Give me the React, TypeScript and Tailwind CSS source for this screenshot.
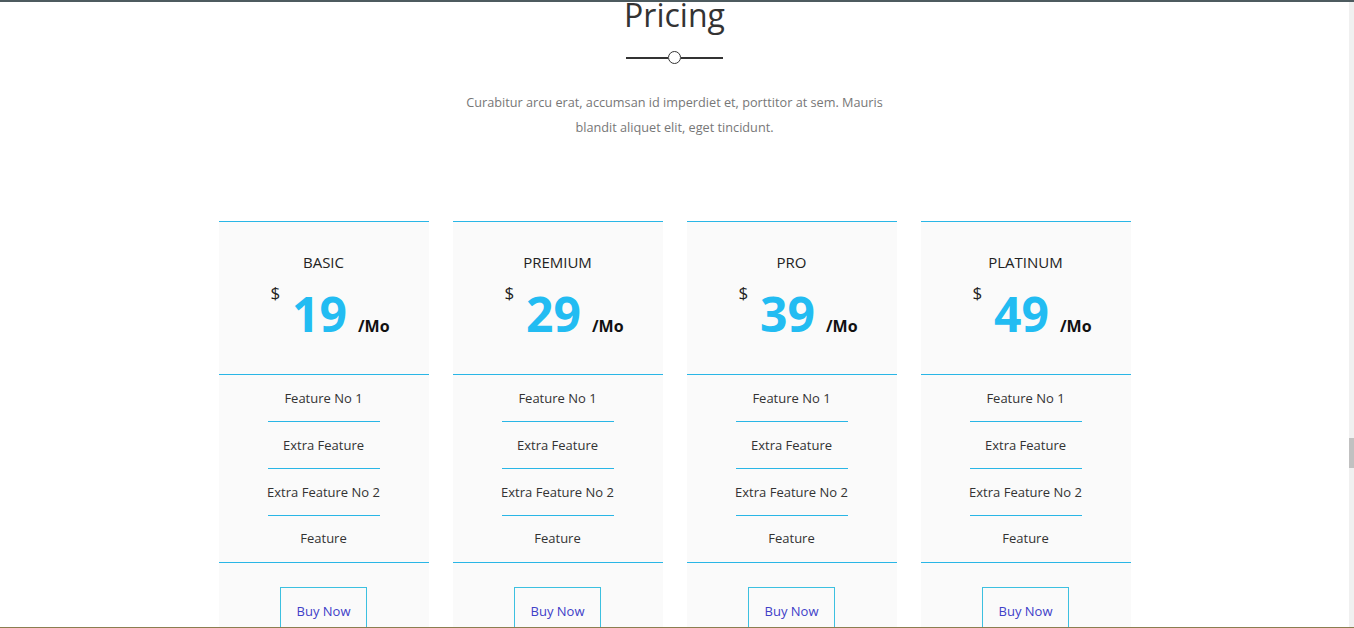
import React from "react";

type Plan = {
  name: string;
  price: number;
};

const plans: Plan[] = [
  { name: "BASIC", price: 19 },
  { name: "PREMIUM", price: 29 },
  { name: "PRO", price: 39 },
  { name: "PLATINUM", price: 49 },
];

const features = ["Feature No 1", "Extra Feature", "Extra Feature No 2", "Feature"];

const PlanCard = ({ plan }: { plan: Plan }) => {
  return (
    <div className="w-[210px] flex flex-col bg-[#fafafa] border-t border-[#29b6e6]">
      <div className="flex flex-col items-center pt-[30px] pb-[36px] border-b border-[#29b6e6]">
        <h3 className="text-[15px] leading-[20px] text-[#222]">{plan.name}</h3>
        <div className="flex items-start mt-[9px] pl-[13px]">
          <span className="text-[17px] leading-[20px] text-[#222] mr-[12px] mt-[2px]">$</span>
          <div className="flex items-baseline mt-[9px]">
            <span className="text-[48px] leading-[48px] font-bold text-[#22bcf2]">{plan.price}</span>
            <span className="text-[16px] leading-[16px] font-bold text-[#111] ml-[11px]">/Mo</span>
          </div>
        </div>
      </div>
      <ul className="flex flex-col items-center border-b border-[#29b6e6]">
        {features.map((f, i) => (
          <li
            key={f}
            className={
              i < features.length - 1
                ? "w-[112px] h-[47px] pt-[2px] flex items-center justify-center whitespace-nowrap border-b border-[#29b6e6] text-[13px] text-[#333]"
                : "w-[112px] h-[46px] flex items-center justify-center whitespace-nowrap text-[13px] text-[#333]"
            }
          >
            {f}
          </li>
        ))}
      </ul>
      <div className="flex justify-center pt-[24px] pb-[30px]">
        <button className="border border-[#3cc0e0] px-[16px] pt-[13px] pb-[14px] text-[13px] leading-[20px] text-[#4040c8]">
          Buy Now
        </button>
      </div>
    </div>
  );
};

const App = () => {
  return (
    <div className="w-full h-[628px] overflow-hidden flex flex-col bg-white font-['Open_Sans',sans-serif]">
      <div className="h-[2px] bg-[#4d5b5f] shrink-0" />
      <div className="flex flex-1 min-h-0">
        <section className="flex-1 flex flex-col items-center">
          <h2 className="text-[32px] leading-[26px] text-[#333]">Pricing</h2>
          <div className="flex items-center mt-[23px]">
            <span className="w-[42px] h-[2px] bg-[#333]" />
            <span className="w-[13px] h-[13px] rounded-full border border-[#333] bg-white" />
            <span className="w-[42px] h-[2px] bg-[#333]" />
          </div>
          <p className="mt-[26px] text-[12.7px] leading-[25px] text-[#777] text-center">
            Curabitur arcu erat, accumsan id imperdiet et, porttitor at sem. Mauris
            <br />
            blandit aliquet elit, eget tincidunt.
          </p>
          <div className="mt-[81px] flex gap-[24px]">
            {plans.map((p) => (
              <PlanCard key={p.name} plan={p} />
            ))}
          </div>
        </section>
        <div className="w-[5px] bg-[#f0f0f0] flex flex-col">
          <div className="h-[436px]" />
          <div className="h-[30px] bg-[#c1c1c1]" />
        </div>
      </div>
      <div className="h-[1px] bg-[#8b7d4f] shrink-0" />
    </div>
  );
};

export default App;
